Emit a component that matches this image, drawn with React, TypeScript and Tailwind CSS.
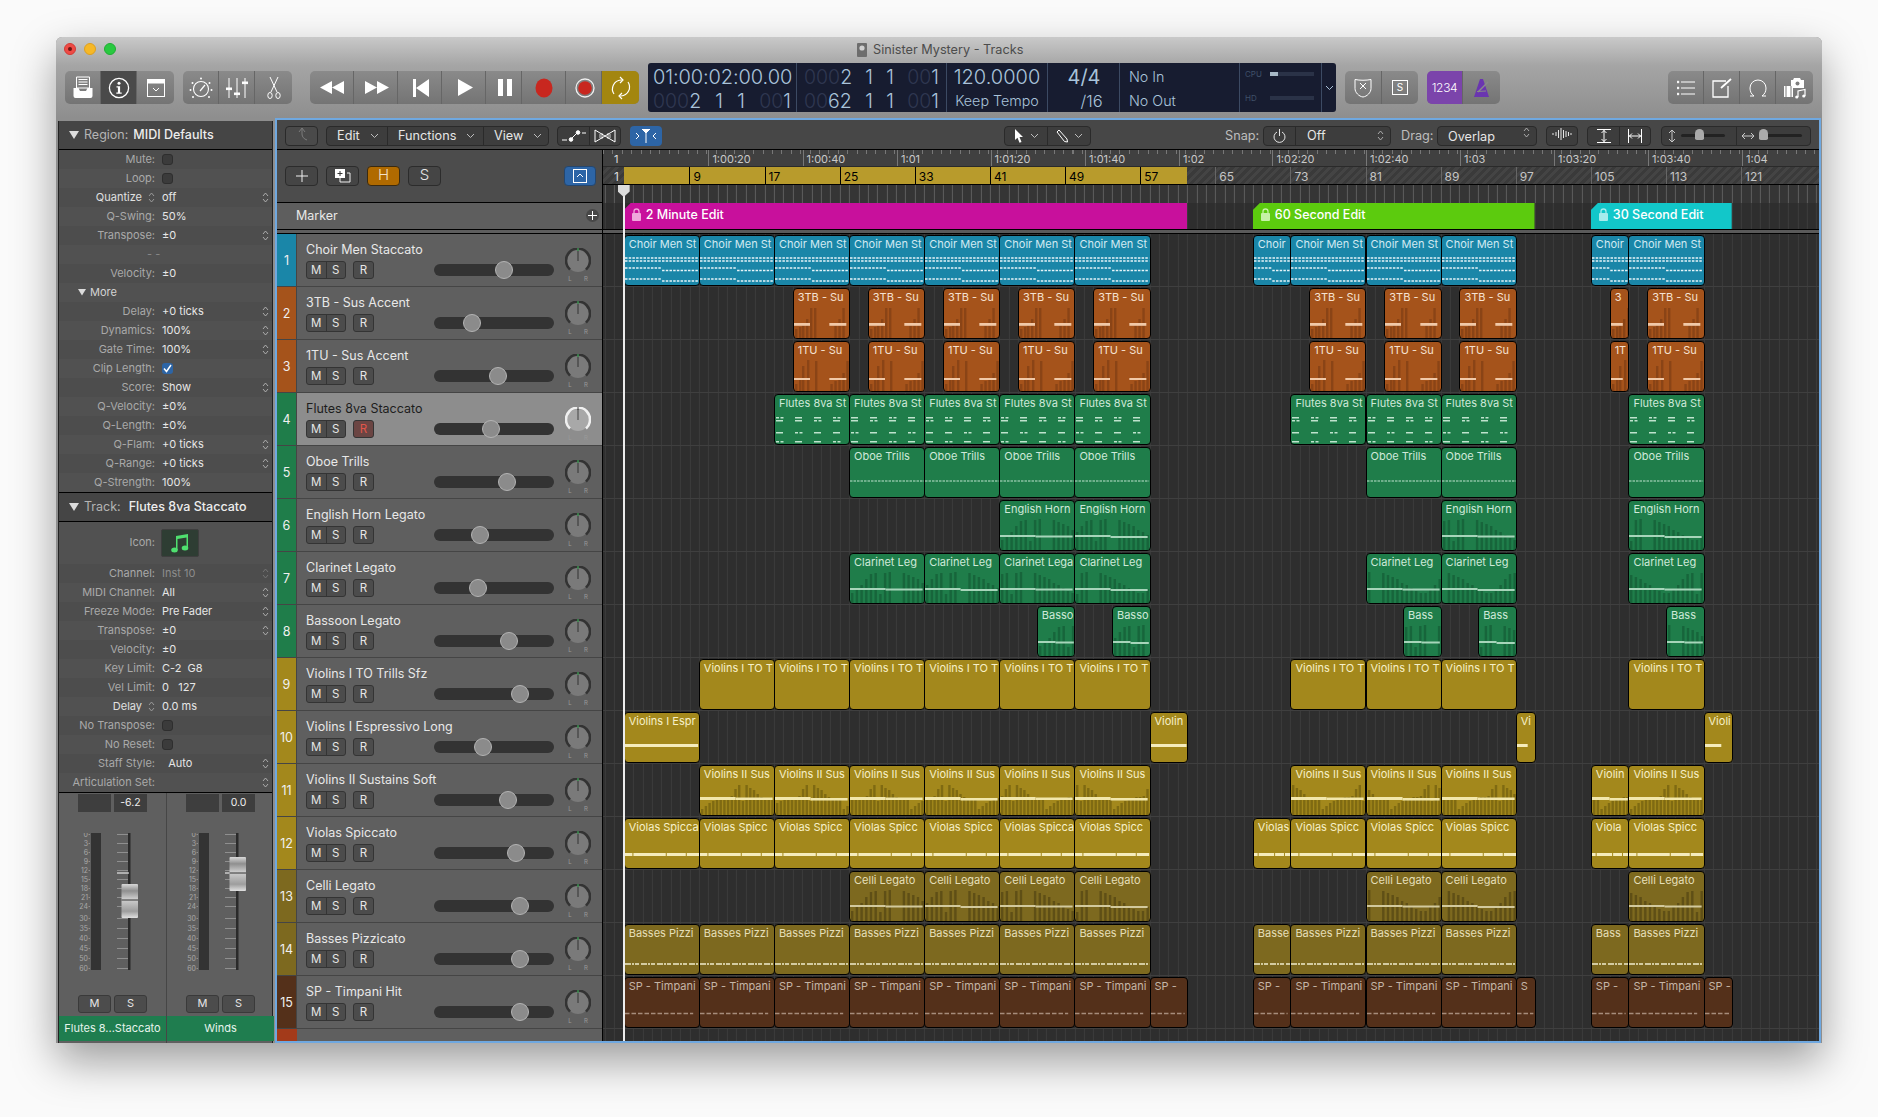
import React from "react";

const X = (b: number) => 11.3 + (b - 1) * 9.39;

type Kind = "choir" | "brass" | "brass2" | "flute" | "oboe" | "legato" | "plain" | "espr" | "strings" | "violas" | "celli" | "basses" | "timp";
type Reg = [number, number, string];
type Track = { n: number; name: string; color: string; pos: number; kind: Kind; fill: string; text: string; regions: Reg[] };

const seg = (label: string, ...bars: number[][]): Reg[] => bars.map((b) => [b[0], b[1], label] as Reg);

const A = [2, 10], B = [10, 18], C = [18, 26], D = [26, 34], E = [34, 42], F = [42, 50], G = [50, 58];
const H = [73, 81], I = [81, 89], J = [89, 97], K = [109, 117];

const BLUE = { color: "#1a86a8", fill: "#1a86a8", text: "#d2eaf2" };
const ORG = { color: "#a5531b", fill: "#a5531b", text: "#f6e2d2" };
const GRN = { color: "#1f7d4a", fill: "#1f7d4a", text: "#cfe9d9" };
const GLD = { color: "#a3881c", fill: "#a3881c", text: "#f7f0c9" };
const OLV = { color: "#7d691f", fill: "#7d691f", text: "#e5dfb8" };
const BRN = { color: "#54301a", fill: "#54301a", text: "#c5b5a6" };

const tracks: Track[] = [
  { n: 1, name: "Choir Men Staccato", pos: 504, kind: "choir", ...BLUE, regions: [...seg("Choir Men St", A, B, C, D, E, F, G), [69, 73, "Choir"], ...seg("Choir Men St", H, I, J), [105, 109, "Choir"], [109, 117, "Choir Men St"]] },
  { n: 2, name: "3TB - Sus Accent", pos: 472, kind: "brass", ...ORG, regions: [...seg("3TB - Su", [20, 26], [28, 34], [36, 42], [44, 50], [52, 58], [75, 81], [83, 89], [91, 97]), [107, 109, "3"], [111, 117, "3TB - Su"]] },
  { n: 3, name: "1TU - Sus Accent", pos: 498, kind: "brass2", ...ORG, regions: [...seg("1TU - Su", [20, 26], [28, 34], [36, 42], [44, 50], [52, 58], [75, 81], [83, 89], [91, 97]), [107, 109, "1T"], [111, 117, "1TU - Su"]] },
  { n: 4, name: "Flutes 8va Staccato", pos: 491, kind: "flute", ...GRN, regions: seg("Flutes 8va St", C, D, E, F, G, H, I, J, K) },
  { n: 5, name: "Oboe Trills", pos: 507, kind: "oboe", ...GRN, regions: seg("Oboe Trills", D, E, F, G, I, J, K) },
  { n: 6, name: "English Horn Legato", pos: 480, kind: "legato", ...GRN, regions: seg("English Horn", F, G, J, K) },
  { n: 7, name: "Clarinet Legato", pos: 478, kind: "legato", ...GRN, regions: [...seg("Clarinet Leg", D, E), [42, 50, "Clarinet Lega"], ...seg("Clarinet Leg", G, I, J, K)] },
  { n: 8, name: "Bassoon Legato", pos: 509, kind: "legato", ...GRN, regions: [[46, 50, "Basso"], [54, 58, "Basso"], [85, 89, "Bass"], [93, 97, "Bass"], [113, 117, "Bass"]] },
  { n: 9, name: "Violins I TO Trills Sfz", pos: 520, kind: "plain", ...GLD, regions: seg("Violins I TO T", B, C, D, E, F, G, H, I, J, K) },
  { n: 10, name: "Violins I Espressivo Long", pos: 483, kind: "espr", ...GLD, regions: [[2, 10, "Violins I Espr"], [58, 62, "Violin"], [97, 99, "Vi"], [117, 120, "Violi"]] },
  { n: 11, name: "Violins II Sustains Soft", pos: 508, kind: "strings", ...GLD, regions: [...seg("Violins II Sus", B, C, D, E, F, G, H, I, J), [105, 109, "Violin"], [109, 117, "Violins II Sus"]] },
  { n: 12, name: "Violas Spiccato", pos: 516, kind: "violas", ...GLD, regions: [[2, 10, "Violas Spicca"], ...seg("Violas Spicc", B, C, D, E), [42, 50, "Violas Spicca"], [50, 58, "Violas Spicc"], [69, 73, "Violas"], ...seg("Violas Spicc", H, I, J), [105, 109, "Viola"], [109, 117, "Violas Spicc"]] },
  { n: 13, name: "Celli Legato", pos: 520, kind: "celli", ...OLV, regions: seg("Celli Legato", D, E, F, G, I, J, K) },
  { n: 14, name: "Basses Pizzicato", pos: 520, kind: "basses", ...OLV, regions: [...seg("Basses Pizzi", A, B, C, D, E, F, G), [69, 73, "Basse"], ...seg("Basses Pizzi", H, I, J), [105, 109, "Bass"], [109, 117, "Basses Pizzi"]] },
  { n: 15, name: "SP - Timpani Hit", pos: 520, kind: "timp", ...BRN, regions: [...seg("SP - Timpani", A, B, C, D, E, F, G), [58, 62, "SP -"], [69, 73, "SP -"], ...seg("SP - Timpani", H, I, J), [97, 99, "S"], [105, 109, "SP -"], [109, 117, "SP - Timpani"], [117, 120, "SP -"]] },
];

const BARS = [10, 14, 18, 24, 29, 30, 9, 30, 31, 0, 0, 30, 28, 26, 24, 20, 18, 15, 12, 10];
const BELL = [6, 9, 12, 14, 16, 17, 18, 18, 19, 26, 30, 14, 30, 27, 25, 21, 18, 17, 16, 15];

function Notes({ kind, w, k }: { kind: Kind; w: number; k: number }) {
  let c: React.ReactNode = null;
  if (kind === "choir") {
    const s = { stroke: "#e6f4f8", strokeWidth: 1.5, strokeDasharray: "2.5 1.2" };
    c = (
      <>
        <line x1={0} x2={w} y1={22} y2={22} {...s} />
        <line x1={0} x2={w} y1={25} y2={25} {...s} />
        <line x1={0} x2={w * 0.5} y1={32} y2={32} {...s} />
        <line x1={w * 0.5} x2={w} y1={34.5} y2={34.5} {...s} />
        <line x1={0} x2={w * 0.5} y1={43} y2={43} {...s} />
        <line x1={w * 0.5} x2={w} y1={45} y2={45} {...s} />
      </>
    );
  } else if (kind === "brass" || kind === "brass2") {
    const y = kind === "brass" ? 34 : 36;
    const dark = "#8a4416";
    const left: number[][] = kind === "brass" ? [[1, 10], [5, 12], [8, 16], [12, 20], [16, 31], [20, 31]] : [[1, 8], [5, 13], [8, 26], [13, 32], [21, 31]];
    const right: number[][] = kind === "brass" ? [[15, 14], [11, 20], [7, 31]] : [[19, 8], [15, 11], [11, 14], [7, 19], [3, 31]];
    c = (
      <>
        {left.map(([x, h], i) => <rect key={i} x={x} y={50 - h} width={2.4} height={h} fill={dark} />)}
        {w > 40 && right.map(([x, h], i) => <rect key={"r" + i} x={w - x} y={50 - h} width={2.4} height={h} fill={dark} />)}
        <rect x={0} y={y} width={w > 40 ? 16 : Math.min(w - 6, 12)} height={kind === "brass" ? 2.8 : 2} fill="#f1c9a8" />
        {w > 40 && <rect x={w - 20} y={y} width={17} height={kind === "brass" ? 2.8 : 2} fill="#f1c9a8" />}
      </>
    );
  } else if (kind === "flute") {
    const rows = [22, 25, 37, 46];
    const groups = [1, 20, 39, 58];
    c = rows.flatMap((y, ri) =>
      groups.map((g, gi) => {
        const two = (ri + gi + k) % 3 === 0;
        return two ? (
          <g key={ri + "-" + gi} fill="#bfe3cd">
            <rect x={g} y={y} width={3} height={1.5} />
            <rect x={g + 4.5} y={y} width={3} height={1.5} />
          </g>
        ) : (
          <rect key={ri + "-" + gi} x={g} y={y} width={7} height={1.5} fill="#bfe3cd" />
        );
      })
    );
  } else if (kind === "oboe") {
    c = <line x1={0} x2={w} y1={33} y2={33} stroke="#bfe3cd" strokeWidth={1.2} strokeDasharray="2.5 1" />;
  } else if (kind === "legato" || kind === "celli" || kind === "strings") {
    const arr = kind === "strings" ? BELL : BARS;
    const dark = kind === "strings" ? "#7f6a12" : kind === "celli" ? "#5f4f16" : "#17653b";
    const col = kind === "strings" ? "#f2e7ac" : kind === "celli" ? "#d2c99d" : "#a7d5ba";
    const y = kind === "strings" ? 31 : kind === "celli" ? 33 : 34;
    const step = kind === "strings" ? 3.7 : 4.7;
    const count = Math.ceil(w / step);
    c = (
      <>
        {Array.from({ length: count }).map((_, i) => {
          const h = arr[(i + k * 2) % arr.length];
          return <rect key={i} x={1 + i * step} y={49 - h} width={2.4} height={h} fill={dark} />;
        })}
        <rect x={0} y={y} width={w * 0.48} height={kind === "strings" ? 3 : 2} fill={col} />
        <rect x={w * 0.48} y={y + (k % 2 ? 1 : 0.5)} width={w * 0.5} height={kind === "strings" ? 2.5 : 2} fill={col} />
      </>
    );
  } else if (kind === "espr") {
    c = <rect x={0} y={31} width={w < 30 ? w * 0.6 : w - 1} height={3} fill="#f5ecbc" />;
  } else if (kind === "violas") {
    c = (
      <>
        <rect x={0} y={34} width={w} height={3} fill="#f5ecbc" />
        <rect x={w * 0.1} y={34} width={1} height={3} fill="#a3881c" />
        <rect x={w * 0.55} y={34} width={1} height={3} fill="#a3881c" />
        <rect x={w * 0.82} y={34} width={1} height={3} fill="#a3881c" />
      </>
    );
  } else if (kind === "basses") {
    c = <line x1={0} x2={w} y1={39} y2={39} stroke="#d3cba0" strokeWidth={1.8} strokeDasharray="6 1 2 1 4 2" />;
  } else if (kind === "timp") {
    c = <line x1={0} x2={w * 0.92} y1={35.5} y2={35.5} stroke="#a68c7b" strokeWidth={1.5} strokeDasharray="4.5 2" />;
  }
  return <svg className="absolute left-0 top-0 pointer-events-none" width={w} height={51}>{c}</svg>;
}

function Region({ a, b, label, t, k }: { a: number; b: number; label: string; t: Track; k: number }) {
  const left = X(a);
  const w = X(b) - X(a) + 1;
  return (
    <div
      className="absolute top-[1px] h-[51px] rounded-[4px] border border-black overflow-hidden"
      style={{ left, width: w, backgroundColor: t.fill }}
    >
      <Notes kind={t.kind} w={w - 2} k={k} />
      <div className="relative pl-[4px] pt-[1px] whitespace-nowrap overflow-hidden text-[11px] leading-[14px]" style={{ color: t.text }}>{label}</div>
    </div>
  );
}

const Chev = ({ c = "#bdbdbd" }: { c?: string }) => (
  <svg width="9" height="6" viewBox="0 0 9 6"><path d="M1 1l3.5 3.5L8 1" fill="none" stroke={c} strokeWidth="1" /></svg>
);
const Step = ({ c = "#b5b5b5" }: { c?: string }) => (
  <svg width="7" height="11" viewBox="0 0 7 11"><path d="M1 4l2.5-3L6 4M1 7l2.5 3L6 7" fill="none" stroke={c} strokeWidth="0.9" /></svg>
);

/* Top toolbar icons */
const I1 = () => (
  <svg width="20" height="23" viewBox="0 0 20 23" fill="#fff">
    <path d="M3.500 1h13v11h-13z" fill="none" stroke="#fff" strokeWidth="1" />
    <path d="M5.500 3.500h9M5.500 6h9M5.500 8.500h9" stroke="#fff" strokeWidth="1" />
    <path d="M0.500 12h5l1.500 3h6l1.500-3h5v8a2 2 0 0 1-2 2h-15a2 2 0 0 1-2-2z" />
  </svg>
);
const I2 = () => (
  <svg width="22" height="22" viewBox="0 0 22 22">
    <circle cx="11" cy="11" r="9.6" fill="none" stroke="#fff" strokeWidth="1.3" />
    <circle cx="11" cy="6.2" r="1.5" fill="#fff" />
    <path d="M8.5 9.2h3.6v6.2h1.6v1.4H8.3v-1.4h1.6v-4.8H8.5z" fill="#fff" />
  </svg>
);
const I3 = () => (
  <svg width="18" height="18" viewBox="0 0 18 18">
    <rect x="0.5" y="0.5" width="17" height="17" fill="none" stroke="#fff" />
    <rect x="0.5" y="0.5" width="17" height="4" fill="#fff" />
    <path d="M6 9l3 3 3-3" fill="none" stroke="#fff" />
  </svg>
);
const I4 = () => (
  <svg width="24" height="24" viewBox="0 0 24 24" fill="none" stroke="#fff">
    <circle cx="12" cy="13" r="7.5" strokeWidth="1.1" /><path d="M11 15l5-6" strokeWidth="1.2" />
    <g fill="#fff" stroke="none"><circle cx="12" cy="2.5" r="1" /><circle cx="3.5" cy="7" r="1" /><circle cx="20.5" cy="7" r="1" /><circle cx="1.5" cy="14" r="1" /><circle cx="22.5" cy="14" r="1" /><circle cx="4" cy="21" r="1" /><circle cx="20" cy="21" r="1" /></g>
  </svg>
);
const I5 = () => (
  <svg width="22" height="20" viewBox="0 0 22 20" fill="none" stroke="#fff" strokeWidth="1">
    <path d="M3 0v20M11 0v20M19 0v20" /><rect x="0.5" y="10" width="5" height="1.6" fill="#fff" /><rect x="8.5" y="15" width="5" height="1.6" fill="#fff" /><rect x="16.5" y="4" width="5" height="1.6" fill="#fff" />
  </svg>
);
const I6 = () => (
  <svg width="14" height="24" viewBox="0 0 14 24" fill="none" stroke="#fff" strokeWidth="1">
    <path d="M3 1l7 15M11 1L4 16" /><ellipse cx="3" cy="19.5" rx="2.2" ry="3" /><ellipse cx="11" cy="19.5" rx="2.2" ry="3" />
  </svg>
);
const Rew = () => <svg width="24" height="15" viewBox="0 0 24 15" fill="#fff"><path d="M0 7.500L12 1v13zM12 7.500L24 1v13z" /></svg>;
const Ffw = () => <svg width="24" height="15" viewBox="0 0 24 15" fill="#fff"><path d="M0 1l12 6.500L0 14zM12 1l12 6.500L12 14z" /></svg>;
const Start = () => <svg width="16" height="18" viewBox="0 0 16 18" fill="#fff"><path d="M0 0h3v18H0zM16 0v18L3 9z" /></svg>;
const Play = () => <svg width="15" height="17" viewBox="0 0 15 17" fill="#fff"><path d="M0 0l15 8.5L0 17z" /></svg>;
const Pause = () => <svg width="14" height="17" viewBox="0 0 14 17" fill="#fff"><path d="M0 0h5v17H0zM9 0h5v17H9z" /></svg>;
const Rec = () => <svg width="18" height="20" viewBox="0 0 18 20"><ellipse cx="9" cy="10" rx="8.5" ry="9.5" fill="#c8271f" /></svg>;
const Cap = () => <svg width="20" height="20" viewBox="0 0 20 20"><circle cx="10" cy="10" r="9" fill="none" stroke="#eee" strokeWidth="1.3" /><circle cx="10" cy="10" r="6.8" fill="#c8271f" /></svg>;
const Cycle = () => (
  <svg width="22" height="24" viewBox="0 0 22 24" fill="none" stroke="#fff" strokeWidth="1.2">
    <path d="M4 18a9 9 0 0 1 7-14h1M18 6a9 9 0 0 1-7 14h-1" /><path d="M10 1l3 3-3 3M12 17l-3 3 3 3" />
  </svg>
);

function Seg({ className = "", children }: { className?: string; children: React.ReactNode }) {
  return <div className={"flex h-[33px] rounded-[5px] overflow-hidden bg-[linear-gradient(#8a8a8a,#747474)] divide-x divide-[#666] " + className}>{children}</div>;
}
const SegItem = ({ w, className = "", children }: { w: string; className?: string; children: React.ReactNode }) => (
  <div className={w + " flex items-center justify-center " + className}>{children}</div>
);

function Pos({ z, v, a = "1", b = "1", zz = "00", e = "1" }: { z: string; v: string; a?: string; b?: string; zz?: string; e?: string }) {
  return (
    <div className="flex justify-between">
      <span><span className="text-[#2f3750]">{z}</span>{v}</span>
      <span className="ml-[10px]">{a}</span>
      <span className="ml-[10px]">{b}</span>
      <span className="ml-[10px]"><span className="text-[#2f3750]">{zz}</span>{e}</span>
    </div>
  );
}

function LCD() {
  return (
    <div className="ml-[9px] w-[688px] h-[49px] rounded-[3px] bg-[#171c30] flex text-[#a9c3da] font-light">
      <div className="w-[149px] border-r border-[#3c4a63] px-[5px] flex flex-col text-[19.5px] leading-[24px] pt-[2px]">
        <div className="text-[20px] tracking-[-0.1px] whitespace-nowrap">01:00:02:00.00</div>
        <Pos z="000" v="2" />
      </div>
      <div className="w-[150px] border-r border-[#3c4a63] px-[7px] flex flex-col text-[19.5px] leading-[24px] pt-[2px]">
        <Pos z="000" v="2" />
        <Pos z="00" v="62" />
      </div>
      <div className="w-[101px] border-r border-[#3c4a63] flex flex-col items-center pt-[2px]">
        <div className="text-[20px] leading-[24px]">120.0000</div>
        <div className="text-[14.3px] leading-[24px] whitespace-nowrap">Keep Tempo</div>
      </div>
      <div className="w-[72px] border-r border-[#3c4a63] flex flex-col items-center pt-[2px]">
        <div className="text-[20px] leading-[24px] font-normal pl-[1px]">4/4</div>
        <div className="text-[16.5px] leading-[24px] pl-[16px]">/16</div>
      </div>
      <div className="w-[120px] border-r border-[#3c4a63] pl-[9px] pt-[2px] text-[14.3px] leading-[24px]">
        <div>No In</div>
        <div>No Out</div>
      </div>
      <div className="w-[82px] border-r border-[#3c4a63] pl-[5px] pt-[6px] text-[8px] text-[#3f5068] leading-[10px] font-normal">
        <div className="flex items-center gap-[7px]">
          <span className="w-[18px]">CPU</span>
          <div className="w-[44px] h-[4px] bg-[#2a3247] flex"><div className="w-[8px] bg-[#a7b8c6]" /></div>
        </div>
        <div className="flex items-center gap-[7px] mt-[14px]">
          <span className="w-[18px]">HD</span>
          <div className="w-[44px] h-[4px] bg-[#2a3247]" />
        </div>
      </div>
      <div className="flex-1 flex items-center justify-center"><Chev c="#a9c3da" /></div>
    </div>
  );
}

function Top() {
  return (
    <div className="h-[81px] bg-[linear-gradient(#c9c9c9,#a5a5a5_35%,#8e8e8e)] rounded-t-[6px] shrink-0">
      <div className="h-[24px] flex items-center relative">
        <div className="flex gap-[8px] pl-[8px]">
          <span className="w-[12px] h-[12px] rounded-full bg-[#ee4b45] border border-[#d33a35] flex items-center justify-center"><span className="w-[4px] h-[4px] rounded-full bg-[#6b1613]" /></span>
          <span className="w-[12px] h-[12px] rounded-full bg-[#f6b827] border border-[#dea01f]" />
          <span className="w-[12px] h-[12px] rounded-full bg-[#29c940] border border-[#1fae33]" />
        </div>
        <div className="ml-[741px] pt-[2px] flex items-center gap-[6px] text-[12.7px] text-[#4c4c4c]">
          <svg width="10" height="14" viewBox="0 0 10 14"><rect width="10" height="14" rx="1" fill="#6d6d6d" /><circle cx="5" cy="5" r="2.6" fill="#cfcfcf" /></svg>
          <span>Sinister Mystery - Tracks</span>
        </div>
      </div>
      <div className="h-[53px] flex items-center pl-[9px]">
        <Seg className="w-[109px]">
          <SegItem w="w-[36px]"><I1 /></SegItem>
          <SegItem w="w-[36px]" className="bg-[#4a4a4a]"><I2 /></SegItem>
          <SegItem w="w-[37px]"><I3 /></SegItem>
        </Seg>
        <Seg className="w-[109px] ml-[9px]">
          <SegItem w="w-[36px]"><I4 /></SegItem>
          <SegItem w="w-[36px]"><I5 /></SegItem>
          <SegItem w="w-[37px]"><I6 /></SegItem>
        </Seg>
        <Seg className="w-[329px] ml-[18px]">
          <SegItem w="w-[44px]"><Rew /></SegItem>
          <SegItem w="w-[44px]" className="pl-[2px]"><Ffw /></SegItem>
          <SegItem w="w-[44px]" className="pl-[2px]"><Start /></SegItem>
          <SegItem w="w-[44px]" className="pl-[4px]"><Play /></SegItem>
          <SegItem w="w-[36px]" className="pl-[2px]"><Pause /></SegItem>
          <SegItem w="w-[44px]"><Rec /></SegItem>
          <SegItem w="w-[36px]" className="pl-[2px]"><Cap /></SegItem>
          <SegItem w="w-[37px]" className="bg-[#a3860f]"><Cycle /></SegItem>
        </Seg>
        <LCD />
        <Seg className="w-[73px] ml-[9px]">
          <SegItem w="w-[37px]">
            <svg width="18" height="20" viewBox="0 0 18 20" fill="none" stroke="#fff"><path d="M1 1.5c5 1 11 1 16 0v9c0 4-4 8-8 8.500-4-.5-8-4.500-8-8.500z" /><path d="M6 5l6 6M12 5l-6 6" /></svg>
          </SegItem>
          <SegItem w="w-[36px]">
            <span className="w-[16px] h-[15px] border border-white flex items-center justify-center text-[10px] text-white">S</span>
          </SegItem>
        </Seg>
        <Seg className="w-[73px] ml-[9px]">
          <SegItem w="w-[36px]" className="bg-[#7b44ab] text-white text-[12px] tracking-[-0.3px] font-light">1234</SegItem>
          <SegItem w="w-[37px]">
            <svg width="16" height="18" viewBox="0 0 16 18"><path d="M6 0h3l6 18H0z" fill="#6a35b0" /><path d="M4 13L14 3" stroke="#8a8a8a" strokeWidth="1.4" /><path d="M3 12.500l9-.5" stroke="#8a8a8a" strokeWidth="1" /></svg>
          </SegItem>
        </Seg>
        <Seg className="w-[145px] ml-[168px]">
          <SegItem w="w-[36px]">
            <svg width="18" height="16" viewBox="0 0 18 16" stroke="#fff" fill="#fff"><path d="M4 2h14M4 8h14M4 14h14" strokeWidth="1" /><circle cx="1" cy="2" r=".9" /><circle cx="1" cy="8" r=".9" /><circle cx="1" cy="14" r=".9" /></svg>
          </SegItem>
          <SegItem w="w-[36px]">
            <svg width="20" height="20" viewBox="0 0 20 20" fill="none" stroke="#fff" strokeWidth="1.3"><path d="M14 3H1v16h15V8" /><path d="M9 10l10-9" strokeWidth="1.8" /></svg>
          </SegItem>
          <SegItem w="w-[36px]">
            <svg width="20" height="20" viewBox="0 0 20 20" fill="none" stroke="#fff"><path d="M2 18h4c-3-2-4-5-4-8a8 8 0 0 1 16 0c0 3-1 6-4 8h4" /></svg>
          </SegItem>
          <SegItem w="w-[37px]">
            <svg width="22" height="22" viewBox="0 0 22 22" fill="#fff"><path d="M10 1h6l1 2h3v8H7V3h2z" /><circle cx="13.500" cy="6.500" r="2" fill="#7d7d7d" /><path d="M0 9h9v11H0z" /><path d="M2 9v11M7 9v11" stroke="#7d7d7d" /><path d="M14 20v-6l7-1.500v6.500" fill="none" stroke="#fff" strokeWidth="1.2" /><circle cx="12.800" cy="20" r="1.600" /><circle cx="19.800" cy="19" r="1.600" /></svg>
          </SegItem>
        </Seg>
      </div>
    </div>
  );
}

type Row = { l: string; v?: string; step?: boolean; check?: boolean | "on"; bright?: boolean; lStep?: boolean; dim?: boolean };
const region: Row[] = [
  { l: "Mute:", check: true }, { l: "Loop:", check: true },
  { l: "Quantize", v: "off", step: true, bright: true, lStep: true },
  { l: "Q-Swing:", v: "50%" },
  { l: "Transpose:", v: "±0", step: true },
  { l: "- -" },
  { l: "Velocity:", v: "±0" },
];
const more: Row[] = [
  { l: "Delay:", v: "+0 ticks", step: true }, { l: "Dynamics:", v: "100%", step: true }, { l: "Gate Time:", v: "100%", step: true },
  { l: "Clip Length:", check: "on" }, { l: "Score:", v: "Show", step: true }, { l: "Q-Velocity:", v: "±0%" }, { l: "Q-Length:", v: "±0%" },
  { l: "Q-Flam:", v: "+0 ticks", step: true }, { l: "Q-Range:", v: "+0 ticks", step: true }, { l: "Q-Strength:", v: "100%" },
];
const trackRows: Row[] = [
  { l: "Channel:", v: "Inst 10", step: true, dim: true }, { l: "MIDI Channel:", v: "All", step: true }, { l: "Freeze Mode:", v: "Pre Fader", step: true },
  { l: "Transpose:", v: "±0", step: true }, { l: "Velocity:", v: "±0" }, { l: "Key Limit:", v: "C-2  G8" }, { l: "Vel Limit:", v: "0   127" },
  { l: "Delay", v: "0.0 ms", bright: true, lStep: true }, { l: "No Transpose:", check: true }, { l: "No Reset:", check: true },
  { l: "Staff Style:", v: "  Auto", step: true }, { l: "Articulation Set:", step: true },
];

function IRow({ r, i }: { r: Row; i: number }) {
  return (
    <div className={"h-[19px] flex items-center text-[11px] shrink-0 " + (i % 2 ? "bg-[#515151]" : "bg-[#4d4d4d]")}>
      <div className={"w-[96px] flex justify-end items-center gap-[6px] whitespace-nowrap " + (r.bright ? "text-[#e0e0e0]" : "text-[#a9a9a9]")}>
        <span>{r.l}</span>
        {r.lStep && <Step c="#a0a0a0" />}
      </div>
      <div className={"ml-[7px] flex-1 flex items-center whitespace-pre " + (r.dim ? "text-[#8c8c8c]" : "text-[#e6e6e6]")}>
        {r.check && (
          <span className={"w-[11px] h-[11px] rounded-[3px] flex items-center justify-center " + (r.check === "on" ? "bg-[#2d65a6]" : "bg-[#3b3b3b] border border-[#2e2e2e]")}>
            {r.check === "on" && <svg width="9" height="9" viewBox="0 0 9 9"><path d="M1 4.500l2.500 3L8 1" fill="none" stroke="#fff" strokeWidth="1.500" /></svg>}
          </span>
        )}
        {r.v}
      </div>
      {r.step && <div className="w-[10px] flex justify-start"><Step c={r.dim ? "#777" : "#b5b5b5"} /></div>}
    </div>
  );
}

const Tri = ({ s = 10 }: { s?: number }) => <svg width={s} height={s * 0.8} viewBox="0 0 10 8"><path d="M0 0h10L5 8z" fill="#dcdcdc" /></svg>;

function IHead({ a, b, gap }: { a: string; b: string; gap: string }) {
  return (
    <div className="h-[29px] shrink-0 bg-[#454545] border-b border-black flex items-center pl-[10px] text-[12.5px] font-medium whitespace-nowrap">
      <Tri />
      <span className="ml-[5px] text-[#b4b4b4] font-normal">{a}</span>
      <span className={gap + " text-[#ededed]"}>{b}</span>
    </div>
  );
}

const SCALE: [string, number][] = [["0", 1], ["3", 10], ["6", 19], ["9", 28], ["12", 37], ["15", 46], ["18", 55], ["21", 64], ["24", 73], ["30", 85], ["35", 95], ["40", 105], ["45", 115], ["50", 125], ["60", 135]];

function Fader({ cap }: { cap: number }) {
  return (
    <svg width="107" height="138" viewBox="0 0 107 138">
      <defs>
        <linearGradient id="capg" x1="0" y1="0" x2="0" y2="1">
          <stop offset="0" stopColor="#d8d8d8" /><stop offset=".2" stopColor="#8f8f8f" /><stop offset=".45" stopColor="#cfcfcf" /><stop offset=".8" stopColor="#9d9d9d" /><stop offset="1" stopColor="#e0e0e0" />
        </linearGradient>
      </defs>
      {SCALE.map(([t, y]) => (
        <g key={t}>
          <text x="29" y={y + 3} textAnchor="end" fontSize="7" fill="#a8a8a8">{t}</text>
          <path d={`M29.500 ${y + 0.5}h1.500M58 ${y + 0.5}h12`} stroke="#8f8f8f" strokeWidth="1" />
        </g>
      ))}
      <rect x="32" y="0" width="10" height="137" fill="#333" />
      <rect x="69" y="0" width="2.500" height="137" fill="#2a2a2a" />
      <path d="M58 40h12" stroke="#fff" strokeWidth="1" />
      <rect x="62.500" y={cap} width="16.500" height="34" rx="1" fill="url(#capg)" />
      <path d={`M62.500 ${cap + 16}h16.500`} stroke="#333" strokeWidth="1" />
    </svg>
  );
}

function Strip({ val, cap, name, last }: { val: string; cap: number; name: string; last?: boolean }) {
  return (
    <div className={"flex-1 flex flex-col items-stretch " + (last ? "" : "border-r border-[#464646]")}>
      <div className="flex gap-[3px] pl-[19px] pt-[1px]">
        <div className="w-[33px] h-[18px] bg-[#3e3e3e]" />
        <div className="w-[33px] h-[18px] bg-[#3e3e3e] text-[#ededed] text-[10.500px] leading-[18px] text-center">{val}</div>
      </div>
      <div className="mt-[21px] h-[138px]"><Fader cap={cap} /></div>
      <div className="mt-[24px] flex gap-[3px] pl-[19px]">
        <div className="w-[33px] h-[18px] rounded-[3px] bg-[#4c4c4c] border border-[#3a3a3a] text-[#e6e6e6] text-[11px] leading-[15px] text-center">M</div>
        <div className="w-[33px] h-[18px] rounded-[3px] bg-[#4c4c4c] border border-[#3a3a3a] text-[#e6e6e6] text-[11px] leading-[15px] text-center">S</div>
      </div>
      <div className="mt-[3px] h-[25px] bg-[#1f7d4f] text-[#e6f4ec] text-[11px] leading-[24px] text-center whitespace-nowrap">{name}</div>
    </div>
  );
}

function Inspector() {
  return (
    <div className="w-[215px] ml-[2px] mt-[3px] flex flex-col shrink-0 border-x border-[#222] bg-[#4d4d4d]">
      <IHead a="Region:" b="MIDI Defaults" gap="ml-[5px]" />
      {region.map((r, i) =>
        r.l === "- -" ? (
          <div key={i} className="h-[19px] bg-[#515151] text-[#888] text-[11px] flex items-center pl-[88px] shrink-0">- -</div>
        ) : (
          <IRow key={i} r={r} i={i} />
        )
      )}
      <div className="h-[19px] bg-[#515151] shrink-0 flex items-center pl-[19px] text-[11px] text-[#d4d4d4]">
        <Tri s={8} /><span className="ml-[4px]">More</span>
      </div>
      {more.map((r, i) => <IRow key={i} r={r} i={i} />)}
      <div className="h-[1px] bg-black shrink-0" />
      <IHead a="Track:" b="Flutes 8va Staccato" gap="ml-[8px]" />
      <div className="h-[42px] pb-[1px] shrink-0 bg-[#515151] flex items-center">
        <div className="w-[96px] text-right text-[11px] text-[#a9a9a9]">Icon:</div>
        <div className="ml-[6px] w-[38px] h-[28px] rounded-[2px] bg-[#2e3d33] border border-[#3e3e3e] flex items-center justify-center">
          <svg width="18" height="20" viewBox="0 0 18 20" fill="#4fe06f"><path d="M5 3l12-2v13h-1.500V4.500l-9 1.500V17H5z" /><ellipse cx="3.500" cy="17" rx="3.300" ry="2.500" /><ellipse cx="14" cy="15" rx="3.300" ry="2.500" /></svg>
        </div>
      </div>
      {trackRows.map((r, i) => <IRow key={i} r={r} i={i} />)}
      <div className="h-[1px] bg-black shrink-0" />
      <div className="flex-1 flex bg-[#5f5f5f]">
        <Strip val="-6.2" cap={51} name="Flutes 8...Staccato" />
        <Strip val="0.0" cap={24} name="Winds" last />
      </div>
    </div>
  );
}

function TB({ className = "", children }: { className?: string; children: React.ReactNode }) {
  return <div className={"h-[20px] rounded-[4px] bg-[#3d3d3d] border border-[#2a2a2a] flex items-stretch text-[12.7px] text-[#e6e6e6] " + className}>{children}</div>;
}

function MainBar() {
  return (
    <div className="h-[30px] bg-[#474747] border-b border-black flex items-center pl-[8px] pt-[2px] shrink-0 whitespace-nowrap">
      <TB className="w-[33px] !bg-[#4a4a4a] items-center justify-center">
        <svg width="14" height="14" viewBox="0 0 14 14" fill="none" stroke="#7b7b7b"><path d="M4 5l3-4 3 4M7 1v6c0 3 2 5 5 6" /></svg>
      </TB>
      <TB className="w-[223px] ml-[8px] divide-x divide-[#2a2a2a]">
        <div className="w-[61px] flex items-center justify-between pl-[10px] pr-[8px]"><span>Edit</span><Chev /></div>
        <div className="w-[96px] flex items-center justify-between pl-[10px] pr-[8px]"><span>Functions</span><Chev /></div>
        <div className="flex-1 flex items-center justify-between pl-[10px] pr-[6px]"><span>View</span><Chev /></div>
      </TB>
      <TB className="w-[64px] ml-[8px] divide-x divide-[#2a2a2a]">
        <div className="w-[32px] flex items-center justify-center">
          <svg width="24" height="12" viewBox="0 0 24 12" fill="#fff" stroke="#fff"><path d="M0 10h5M20 3h4" /><path d="M9 9l6-6" /><circle cx="9" cy="9.500" r="1.800" /><circle cx="16" cy="2.500" r="1.800" /></svg>
        </div>
        <div className="flex-1 flex items-center justify-center">
          <svg width="22" height="14" viewBox="0 0 22 14" fill="none" stroke="#fff"><path d="M1 1v12L11 7l10 6V1L11 7z" /><path d="M6 5v4M8 4v6M14 4v6M16 5v4" strokeWidth=".8" /></svg>
        </div>
      </TB>
      <div className="w-[32px] h-[20px] ml-[9px] rounded-[4px] bg-[#2d65a6] flex items-center justify-center">
        <svg width="22" height="14" viewBox="0 0 22 14" fill="none" stroke="#fff"><path d="M1 4l3 3-3 3M21 4l-3 3 3 3M11 3v11" /><path d="M7 0h8l-4 4z" fill="#fff" /></svg>
      </div>
      <TB className="w-[87px] ml-[342px] divide-x divide-[#2a2a2a]">
        <div className="w-[43px] flex items-center justify-center gap-[6px]">
          <svg width="10" height="14" viewBox="0 0 10 14" fill="#fff"><path d="M1 0l8 8H5.500l2 5-2 .7-2-5L1 11z" /></svg><Chev />
        </div>
        <div className="flex-1 flex items-center justify-center gap-[6px]">
          <svg width="12" height="14" viewBox="0 0 12 14" fill="none" stroke="#fff"><path d="M1 3l2-2 8 9 .5 3-3-.5z" /></svg><Chev />
        </div>
      </TB>
      <span className="ml-[134px] w-[34px] text-[12.7px] text-[#bdbdbd]">Snap:</span>
      <TB className="w-[128px] ml-[4px] divide-x divide-[#2a2a2a]">
        <div className="w-[32px] flex items-center justify-center">
          <svg width="13" height="14" viewBox="0 0 13 14" fill="none" stroke="#e6e6e6"><path d="M4 3a5.500 5.500 0 1 0 5 0M6.500 0v7" /></svg>
        </div>
        <div className="flex-1 flex items-center justify-between pl-[11px] pr-[6px]"><span>Off</span><Step /></div>
      </TB>
      <span className="ml-[10px] w-[32px] text-[12.7px] text-[#bdbdbd]">Drag:</span>
      <TB className="w-[100px] ml-[4px] items-center justify-between pl-[10px] pr-[6px]"><span>Overlap</span><Step /></TB>
      <TB className="w-[32px] ml-[9px] items-center justify-center">
        <svg width="20" height="14" viewBox="0 0 20 14" stroke="#e6e6e6" strokeWidth="1"><path d="M1 6v2M4 5v4M6.500 3v8M9 1v12M11.500 3v8M14 4v6M16.500 5v4M19 6v2" /></svg>
      </TB>
      <TB className="w-[64px] ml-[9px] divide-x divide-[#2a2a2a]">
        <div className="w-[32px] flex items-center justify-center">
          <svg width="14" height="14" viewBox="0 0 14 14" fill="none" stroke="#fff"><path d="M0 .5h14M0 13.500h14M7 1v12M4.500 4L7 1.500 9.500 4M4.500 10L7 12.500 9.500 10" /></svg>
        </div>
        <div className="flex-1 flex items-center justify-center">
          <svg width="14" height="14" viewBox="0 0 14 14" fill="none" stroke="#fff"><path d="M.5 0v14M13.500 0v14M1 7h12M4 4.500L1.500 7 4 9.500M10 4.500L12.500 7 10 9.500" /></svg>
        </div>
      </TB>
      <TB className="w-[150px] ml-[9.500px] divide-x divide-[#2a2a2a]">
        <div className="w-[75px] flex items-center pl-[6px] gap-[5px]">
          <svg width="8" height="14" viewBox="0 0 8 14" fill="none" stroke="#c8c8c8"><path d="M4 1v12M1 4l3-3 3 3M1 10l3 3 3-3" /></svg>
          <div className="relative w-[44px] h-[3px] bg-[#222] rounded-full"><div className="absolute left-[14px] -top-[5px] w-[9px] h-[11px] bg-[#aaa] rounded-t-[5px] rounded-b-[2px]" /></div>
        </div>
        <div className="flex-1 flex items-center pl-[4px] gap-[6px]">
          <svg width="14" height="8" viewBox="0 0 14 8" fill="none" stroke="#c8c8c8"><path d="M1 4h12M4 1L1 4l3 3M10 1l3 3-3 3" /></svg>
          <div className="relative w-[41px] h-[3px] bg-[#222] rounded-full"><div className="absolute left-[-2px] -top-[5px] w-[9px] h-[11px] bg-[#aaa] rounded-t-[5px] rounded-b-[2px]" /></div>
        </div>
      </TB>
    </div>
  );
}

const HBtn = ({ className = "", children }: { className?: string; children: React.ReactNode }) => (
  <div className={"w-[33px] h-[20px] rounded-[4px] border flex items-center justify-center " + className}>{children}</div>
);

function Pan({ sel }: { sel?: boolean }) {
  return (
    <svg width="26" height="36" viewBox="0 0 26 36">
      <circle cx="13" cy="13" r="11" fill={sel ? "#a8a8a8" : "#7a7a7a"} />
      <path d="M5 21.500A12 12 0 1 1 21 21.500" fill="none" stroke={sel ? "#f0f0f0" : "#333"} strokeWidth="2.600" />
      <path d="M13 2v11" stroke={sel ? "#444" : "#333"} strokeWidth="1" />
      <path d="M13 0v3" stroke={sel ? "#444" : "#3dbb5a"} strokeWidth="1" />
      <text x="5" y="33" fontSize="6" fill="#9a9a9a" textAnchor="middle">L</text>
      <text x="21" y="33" fontSize="6" fill="#9a9a9a" textAnchor="middle">R</text>
    </svg>
  );
}

function TrackHead({ t }: { t: Track }) {
  const sel = t.n === 4;
  return (
    <div className={"h-[53px] flex border-b border-[#454545] " + (sel ? "bg-[#8d8d8d]" : "bg-[#5f5f5f]")}>
      <div className="w-[20px] pt-[2px] flex items-center justify-center text-[12.500px] text-[#f0f0f0] border-r border-[#454545] shrink-0" style={{ backgroundColor: t.color }}>{t.n}</div>
      <div className="w-[137px] pl-[9px] shrink-0">
        <div className={"h-[27px] pt-[9px] text-[12.500px] leading-[14px] whitespace-nowrap " + (sel ? "text-[#1d1d1d]" : "text-[#e8e8e8]")}>{t.name}</div>
        <div className="flex items-center text-[11.500px] text-[#e6e6e6]">
          <div className="w-[40px] h-[18px] rounded-[3px] bg-[#4c4c4c] border border-[#343434] flex divide-x divide-[#343434] leading-[16px] text-center">
            <span className="flex-1">M</span><span className="flex-1">S</span>
          </div>
          <div className={"ml-[7px] w-[21px] h-[18px] rounded-[3px] border border-[#343434] leading-[16px] text-center " + (sel ? "bg-[#6b4543] text-[#e0564a]" : "bg-[#4c4c4c]")}>R</div>
        </div>
      </div>
      <div className="w-[120px] pt-[30px] shrink-0">
        <div className="relative h-[12px] rounded-full bg-[#333]">
          <div className="absolute -top-[3px] w-[18px] h-[18px] rounded-full bg-[#8b8b8b] border border-[#b4b4b4]" style={{ left: t.pos - 434 - 9 }} />
        </div>
      </div>
      <div className="ml-[11px] pt-[14px]"><Pan sel={sel} /></div>
    </div>
  );
}

function Header() {
  return (
    <div className="w-[326px] shrink-0 flex flex-col border-r border-black">
      <div className="h-[53px] shrink-0 bg-[#4c4c4c] border-b border-black flex items-center pl-[8px] pb-[1px]">
        <HBtn className="bg-[#454545] border-[#2c2c2c]">
          <svg width="12" height="12" viewBox="0 0 12 12" stroke="#f0f0f0"><path d="M6 0v12M0 6h12" /></svg>
        </HBtn>
        <HBtn className="ml-[8px] bg-[#454545] border-[#2c2c2c]">
          <svg width="16" height="14" viewBox="0 0 16 14"><path d="M5 5v8h10V4h-3" fill="none" stroke="#f0f0f0" /><rect x="0" y="0" width="10" height="9" fill="#fff" /><path d="M5 2v5M2.500 4.500h5" stroke="#333" /></svg>
        </HBtn>
        <HBtn className="ml-[8px] bg-[#b06a00] border-[#3a2a10] text-[15px] text-[#f2e1c9] font-light">H</HBtn>
        <HBtn className="ml-[8px] bg-[#454545] border-[#2c2c2c] text-[15px] text-[#e8e8e8] font-light">S</HBtn>
        <HBtn className="ml-[123px] !w-[32px] bg-[#2d65a6] border-[#24466e]">
          <svg width="14" height="14" viewBox="0 0 14 14" fill="none" stroke="#fff"><rect x=".5" y=".5" width="13" height="13" /><path d="M4 8l3-3 3 3" /></svg>
        </HBtn>
      </div>
      <div className="h-[27px] shrink-0 bg-[#5e5e5e] border-b border-black flex items-center justify-between pl-[19px] pr-[3px] text-[12.500px] text-[#e8e8e8]">
        <span>Marker</span>
        <span className="w-[13px] h-[13px] mb-[2px] rounded-full bg-[#474747] flex items-center justify-center">
          <svg width="9" height="9" viewBox="0 0 9 9" stroke="#fff"><path d="M4.500 0v9M0 4.500h9" /></svg>
        </span>
      </div>
      <div className="h-[4px] shrink-0 bg-[#5e5e5e] border-b border-black" />
      <div className="flex-1 overflow-hidden bg-[#5f5f5f]">
        {tracks.map((t) => <TrackHead key={t.n} t={t} />)}
        <div className="h-[20px] flex">
          <div className="w-[20px] bg-[#a33a1a]" />
        </div>
      </div>
    </div>
  );
}

const BARNUMS = [9, 17, 25, 33, 41, 49, 57, 65, 73, 81, 89, 97, 105, 113, 121];
const TIMES: [string, number][] = [["1:00:20", 105.4], ["1:00:40", 199.5], ["1:01", 294], ["1:01:20", 387.6], ["1:01:40", 482], ["1:02", 576], ["1:02:20", 669.4], ["1:02:40", 763], ["1:03", 857], ["1:03:20", 951], ["1:03:40", 1045], ["1:04", 1139]];

function Marker({ a, b, label, color, lock }: { a: number; b: number; label: string; color: string; lock: string }) {
  return (
    <div className="absolute top-0 h-[26px] text-white [clip-path:polygon(7px_0,100%_0,100%_100%,0_100%,0_7px)] flex items-start pt-[5px] pl-[8px] text-[12.5px] leading-[14px] font-medium whitespace-nowrap" style={{ left: X(a), width: X(b) - X(a), backgroundColor: color }}>
      <svg width="9" height="13" viewBox="0 0 9 13" className="mr-[5px]"><path d="M2 5V3.500a2.500 2.500 0 0 1 5 0V5" fill="none" stroke={lock} strokeWidth="1.300" /><rect y="5" width="9" height="8" rx="1" fill={lock} /></svg>
      {label}
    </div>
  );
}

function Arrange() {
  return (
    <div className="flex-1 relative flex flex-col overflow-hidden min-w-0">
      <div className="relative h-[17px] shrink-0 bg-[#404040] border-b border-[#2a2a2a] overflow-hidden bg-[repeating-linear-gradient(90deg,#777_0,#777_1px,transparent_1px,transparent_9.39px)] bg-[length:100%_4px] bg-no-repeat text-[11px] text-[#c9c9c9]">
        <div className="absolute left-[11px] top-[2px] leading-[14px] text-[#ddd] text-[11px]">1</div>
        {TIMES.map(([t, x]) => (
          <div key={t} className="absolute top-0 h-[17px] border-l border-[#777] pl-[3px] leading-[19px]" style={{ left: x }}>{t}</div>
        ))}
      </div>
      <div className="relative h-[18px] shrink-0 border-b border-black bg-[repeating-linear-gradient(135deg,#3a3a3a_0,#3a3a3a_3px,#444_3px,#444_6px)] text-[12px] overflow-hidden">
        <div className="absolute top-0 h-[18px] bg-[#b89b2c]" style={{ left: X(2), width: X(62) - X(2) }} />
        <div className="absolute top-0 left-[11px] leading-[19px] text-[#dcdcdc]">1</div>
        {BARNUMS.map((n) => (
          <div key={n} className={"absolute top-0 h-[18px] border-l pl-[3px] leading-[19px] " + (n < 62 ? "border-black text-black" : "border-[#666] text-[#c5c5c5]")} style={{ left: X(n) }}>{n}</div>
        ))}
      </div>
      <div className="h-[18px] shrink-0 bg-[#353535] bg-[repeating-linear-gradient(90deg,#5d5d5d_0,#5d5d5d_1px,transparent_1px,transparent_9.39px)] bg-[position:1.9px_0]" />
      <div className="relative h-[27px] shrink-0 border-b border-black bg-[#2e2e2e] bg-[repeating-linear-gradient(90deg,#3c3c3c_0,#3c3c3c_1px,transparent_1px,transparent_9.39px)] bg-[position:1.9px_0]">
        <Marker a={2} b={62} label="2 Minute Edit" color="#c8109c" lock="#f0a6dc" />
        <Marker a={69} b={99} label="60 Second Edit" color="#5ccb0e" lock="#c6f2a6" />
        <Marker a={105} b={120} label="30 Second Edit" color="#12c7c9" lock="#a6ecec" />
      </div>
      <div className="h-[4px] shrink-0 bg-[#5a5a5a] border-b border-black" />
      <div className="flex-1 overflow-hidden bg-[#2e2e2e] bg-[repeating-linear-gradient(90deg,#3b3b3b_0,#3b3b3b_1px,transparent_1px,transparent_9.39px)] bg-[position:1.9px_0]">
        {tracks.map((t) => (
          <div key={t.n} className="relative h-[53px] border-b border-[#3f3f3f]">
            {t.regions.map(([a, b, l], i) => <Region key={i} a={a} b={b} label={l} t={t} k={i} />)}
          </div>
        ))}
      </div>
      <div className="absolute top-[35px] bottom-0 w-[2px] bg-[#ececec]" style={{ left: X(2) - 1 }} />
      <div className="absolute top-[35px] w-[12px] h-[12px] bg-[#dcdcdc] [clip-path:polygon(0_0,100%_0,100%_55%,50%_100%,0_55%)]" style={{ left: X(2) - 6 }} />
    </div>
  );
}

export default function App() {
  return (
    <div className="w-[1878px] h-[1117px] bg-[#fafafa] pt-[37px] pl-[56px] overflow-hidden [font-family:Inter,'Liberation_Sans',sans-serif]">
      <div className="w-[1766px] h-[1006px] bg-[#8e8e8e] rounded-t-[6px] shadow-[0_18px_44px_rgba(0,0,0,0.38)] flex flex-col">
        <Top />
        <div className="flex-1 flex min-h-0">
          <Inspector />
          <div className="ml-[2px] w-[1546px] flex flex-col border-2 border-[#6fa8e0] bg-[#333] min-h-0">
            <MainBar />
            <div className="flex-1 flex min-h-0">
              <Header />
              <Arrange />
            </div>
          </div>
        </div>
      </div>
    </div>
  );
}
